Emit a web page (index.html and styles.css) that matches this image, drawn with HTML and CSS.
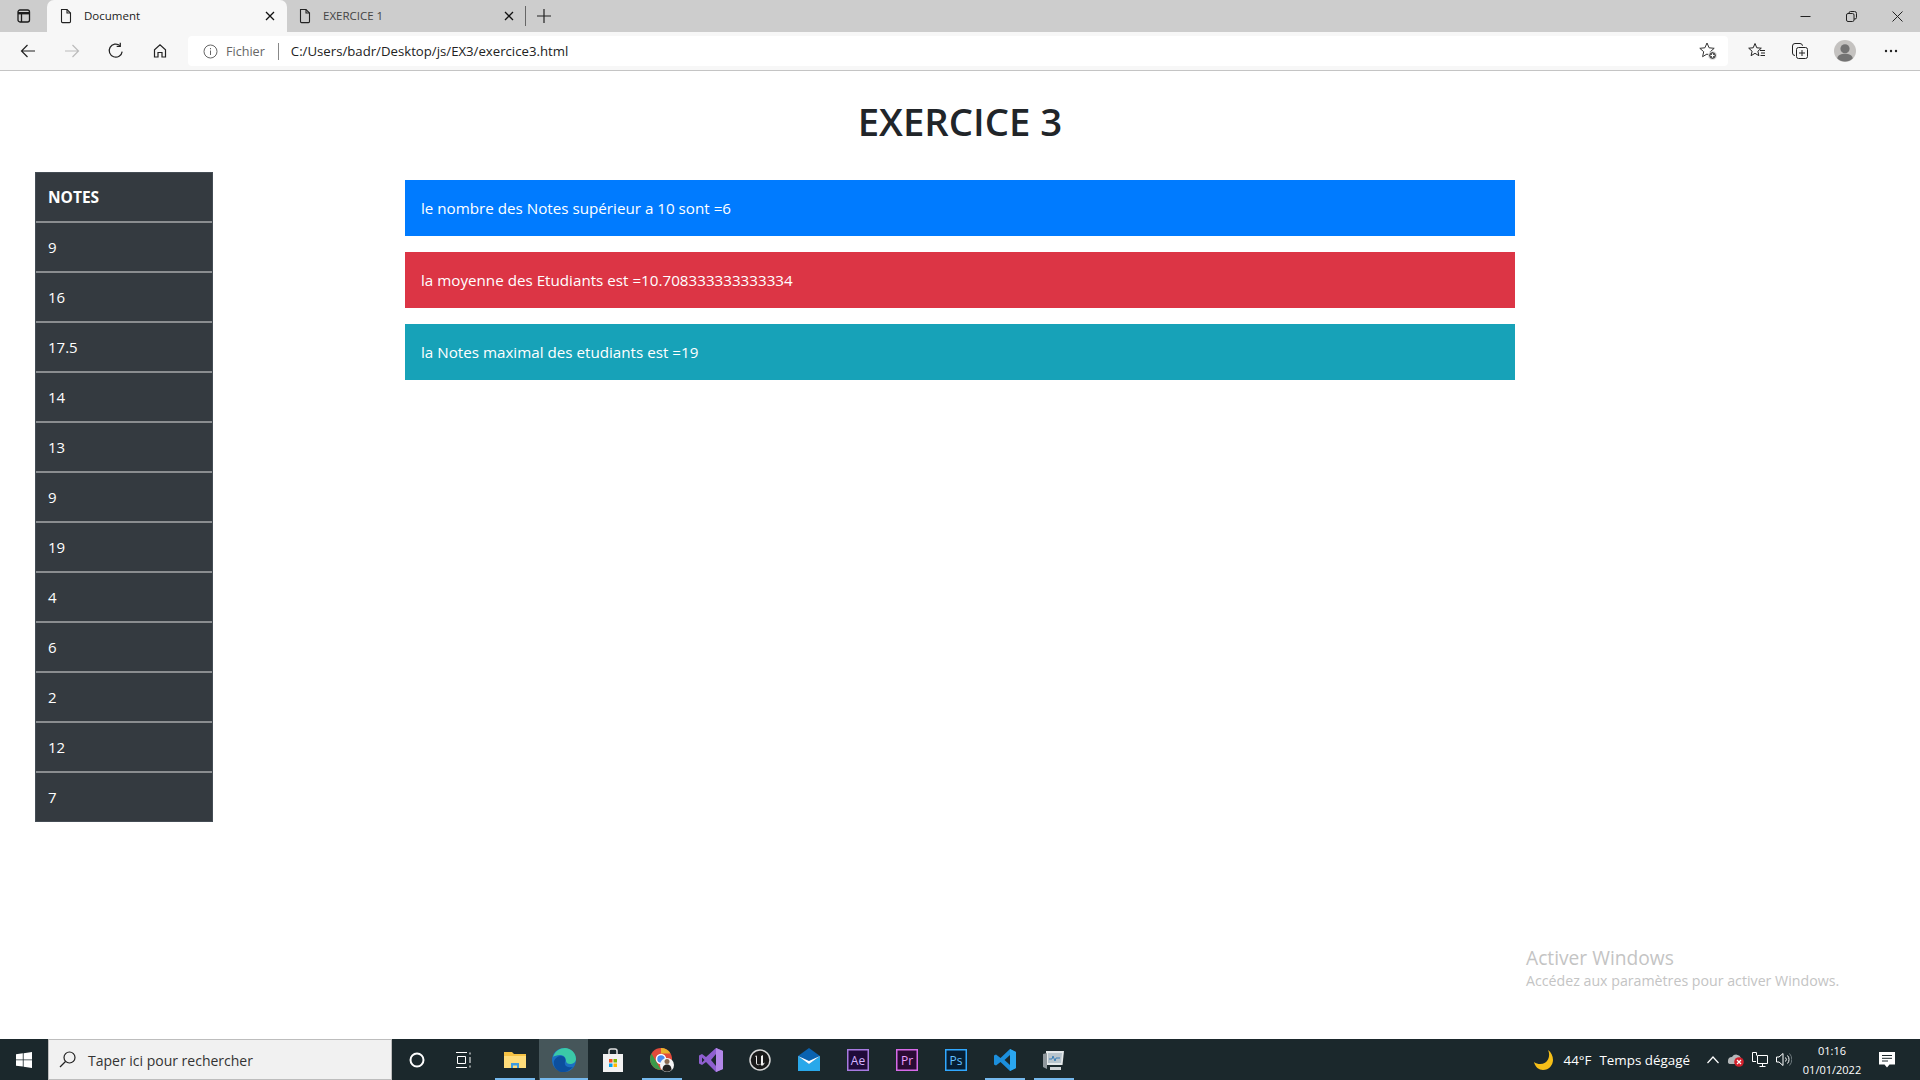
FILE: index.html
```html
<!DOCTYPE html>
<html lang="fr">
<head>
<meta charset="utf-8">
<title>Document</title>
<link rel="stylesheet" href="styles.css">
</head>
<body>
<div class="screen">
  <header class="tabbar">
    <div class="tabside">
      <svg class="ic" width="16" height="16" viewBox="0 0 16 16" fill="none" stroke="#1a1a1a" stroke-width="1.3"><rect x="2" y="2" width="11.5" height="12" rx="2"/><path d="M2 5.2h11.5" stroke-width="2.4"/><path d="M5.5 5v9"/></svg>
    </div>
    <div class="tab tab-active">
      <svg class="ic" width="14" height="16" viewBox="0 0 14 16" fill="none" stroke="#222" stroke-width="1.1"><path d="M2.5 1.5h5.5l3.5 3.5v8.6a1 1 0 0 1-1 1H3.500a1 1 0 0 1-1-1z"/><path d="M8 1.500v3.500h3.500"/></svg>
      <span class="tabtitle">Document</span>
      <svg class="ic tabx" width="10" height="10" viewBox="0 0 10 10" stroke="#111" stroke-width="1.300"><path d="M1 1l8 8M9 1l-8 8"/></svg>
    </div>
    <div class="tab tab-second">
      <svg class="ic" width="14" height="16" viewBox="0 0 14 16" fill="none" stroke="#222" stroke-width="1.100"><path d="M2.500 1.500h5.500l3.500 3.500v8.600a1 1 0 0 1-1 1H3.500a1 1 0 0 1-1-1z"/><path d="M8 1.500v3.500h3.500"/></svg>
      <span class="tabtitle tabtitle-dim">EXERCICE 1</span>
      <svg class="ic tabx" width="10" height="10" viewBox="0 0 10 10" stroke="#111" stroke-width="1.300"><path d="M1 1l8 8M9 1l-8 8"/></svg>
    </div>
    <div class="tabsep"></div>
    <svg class="ic newtab" width="14" height="14" viewBox="0 0 14 14" stroke="#222" stroke-width="1.200"><path d="M7 0v14M0 7h14"/></svg>
    <div class="winctl">
      <svg class="ic" width="11" height="11" viewBox="0 0 11 11" stroke="#222"><path d="M0.500 5.500h10"/></svg>
      <svg class="ic" width="11" height="11" viewBox="0 0 11 11" fill="none" stroke="#222"><rect x="0.500" y="2.500" width="7.500" height="8" rx="1.500"/><path d="M3 2.500v-.5a1.500 1.500 0 0 1 1.500-1.500h4a2 2 0 0 1 2 2v4a1.500 1.500 0 0 1-1.500 1.500H8"/></svg>
      <svg class="ic" width="11" height="11" viewBox="0 0 11 11" stroke="#222"><path d="M.5.500l10 10M10.500.500l-10 10"/></svg>
    </div>
  </header>

  <nav class="toolbar">
    <svg class="ic tool tool-first" width="16" height="16" viewBox="0 0 16 16" fill="none" stroke="#222" stroke-width="1.200"><path d="M15 8H1.500M7.500 2l-6 6 6 6"/></svg>
    <svg class="ic tool" width="16" height="16" viewBox="0 0 16 16" fill="none" stroke="#bbb" stroke-width="1.200"><path d="M1 8h13.500M8.500 2l6 6-6 6"/></svg>
    <svg class="ic tool tool-big" width="18" height="18" viewBox="0 0 16 16" fill="none" stroke="#222" stroke-width="1.100"><path d="M13.500 8.500A5.800 5.800 0 1 1 11.500 3.200"/><path d="M11.800 .6v3.200H8.600"/></svg>
    <svg class="ic tool" width="16" height="16" viewBox="0 0 16 16" fill="none" stroke="#222" stroke-width="1.200"><path d="M2.500 14V6.800L8 1.800l5.500 5V14h-3.500V9.500H6V14z"/></svg>
    <div class="omnibox">
      <svg class="ic" width="15" height="15" viewBox="0 0 15 15" fill="none" stroke="#666"><circle cx="7.500" cy="7.500" r="6.500"/><path d="M7.500 6.500v4.500M7.500 4v1.300"/></svg>
      <span class="scheme">Fichier</span>
      <span class="omnisep"></span>
      <span class="url">C:/Users/badr/Desktop/js/EX3/exercice3.html</span>
      <svg class="ic omnistar" width="18" height="18" viewBox="0 0 18 18" fill="none" stroke="#333"><path d="M8 1l2.100 4.800 5.100.5-3.900 3.400 1.100 5-4.400-2.700-4.400 2.700 1.100-5L.8 6.300l5.100-.5z"/><circle cx="13.500" cy="13.500" r="4" fill="#555" stroke="#f7f7f7"/><path d="M13.500 11.500v4M11.500 13.500h4" stroke="#fff"/></svg>
    </div>
    <div class="tools-right">
      <svg class="ic" width="18" height="18" viewBox="0 0 18 18" fill="none" stroke="#222"><path d="M7 1.500l1.800 4.300 4.500.4-3.400 3 1 4.500L7 11.300 3.100 13.700l1-4.500L.7 6.200l4.500-.4zM12 8.500h5M13 11h4M12.500 13.500h4.500"/></svg>
      <svg class="ic" width="18" height="18" viewBox="0 0 18 18" fill="none" stroke="#222"><path d="M4 13.500A2.500 2.500 0 0 1 1.500 11V4A2.500 2.500 0 0 1 4 1.500h5A2.500 2.500 0 0 1 11.500 3.800"/><rect x="5.500" y="5.500" width="11" height="11" rx="2"/><path d="M11 8v6M8 11h6"/></svg>
      <svg class="ic" width="22" height="22" viewBox="0 0 24 24"><circle cx="12" cy="12" r="12" fill="#c4c2c0"/><circle cx="12" cy="9.500" r="5" fill="#737373"/><path d="M3.500 20c1-4 4.500-5 8.500-5s7.500 1 8.500 5a12 12 0 0 1-17 0z" fill="#737373"/></svg>
      <svg class="ic tool-dots" width="14" height="4" viewBox="0 0 14 4" fill="#222"><circle cx="2" cy="2" r="1.200"/><circle cx="7" cy="2" r="1.200"/><circle cx="12" cy="2" r="1.200"/></svg>
    </div>
  </nav>

  <main class="page">
    <h1 class="title">EXERCICE 3</h1>
    <div class="content">
      <table class="notes">
        <thead><tr><th>NOTES</th></tr></thead>
        <tbody>
          <tr><td>9</td></tr>
          <tr><td>16</td></tr>
          <tr><td>17.5</td></tr>
          <tr><td>14</td></tr>
          <tr><td>13</td></tr>
          <tr><td>9</td></tr>
          <tr><td>19</td></tr>
          <tr><td>4</td></tr>
          <tr><td>6</td></tr>
          <tr><td>2</td></tr>
          <tr><td>12</td></tr>
          <tr><td>7</td></tr>
        </tbody>
      </table>
      <div class="alerts">
        <div class="alert alert-blue">le nombre des Notes supérieur a 10 sont =6</div>
        <div class="alert alert-red">la moyenne des Etudiants est =10.708333333333334</div>
        <div class="alert alert-teal">la Notes maximal des etudiants est =19</div>
      </div>
    </div>
    <div class="watermark">
      <div class="wm-title">Activer Windows</div>
      <div class="wm-sub">Accédez aux paramètres pour activer Windows.</div>
    </div>
  </main>

  <footer class="taskbar">
    <div class="start">
      <svg class="ic" width="16" height="16" viewBox="0 0 16 16" fill="#fff"><path d="M0 2.300l6.800-1v6.200H0zM7.600 1.200L16 0v7.500H7.600zM0 8.300h6.800v6.300L0 13.700zM7.600 8.300H16V16l-8.400-1.200z"/></svg>
    </div>
    <div class="search">
      <svg class="ic" width="17" height="17" viewBox="0 0 17 17" fill="none" stroke="#222" stroke-width="1.200"><circle cx="10.500" cy="6.500" r="5.500"/><path d="M6.500 10.500L1 16"/></svg>
      <span class="search-text">Taper ici pour rechercher</span>
    </div>
    <div class="tb-cell">
      <svg class="ic" width="16" height="16" viewBox="0 0 16 16" fill="none" stroke="#fff" stroke-width="2"><circle cx="8" cy="8" r="6.500"/></svg>
    </div>
    <div class="tb-cell tb-view">
      <svg class="ic" width="16" height="16" viewBox="0 0 16 16" fill="none" stroke="#fff"><path d="M0 .5h11M0 15.500h11M1.500 4.500h8v7h-8zM14 .5v2M14 5v6M14 13.500v2"/></svg>
    </div>
    <div class="apps">
      <div class="app app-open">
        <svg class="ic" width="22" height="20" viewBox="0 0 22 20"><path d="M0 2h8l2 2h12v14H0z" fill="#f6c244"/><path d="M0 6h22v12H0z" fill="#ffdc7a"/><path d="M7 13h8v5h-2v-2.500H9V18H7z" fill="#3d9be0"/></svg>
      </div>
      <div class="app app-active">
        <svg class="ic" width="24" height="24" viewBox="0 0 24 24"><circle cx="12" cy="12" r="12" fill="#1b6fc2"/><path d="M1 9C3 3 8 0 13 0c6 0 11 5 11 11 0 3-3 5-6 5-2 0-4-1-4-3 0-4-3-6-6-6-3 0-6 1-7 2z" fill="#3bc9a7"/><path d="M9 24C4 22 1 18 2 13c1-3 4-5 7-5 4 0 5 3 4 6-1 4 3 6 8 5-3 3-7 6-12 5z" fill="#0c4f9e"/></svg>
      </div>
      <div class="app">
        <svg class="ic" width="20" height="24" viewBox="0 0 20 24"><path d="M6 7V3a2 2 0 0 1 2-2h4a2 2 0 0 1 2 2v4" fill="none" stroke="#e0e0e0" stroke-width="1.500"/><path d="M0 6h20v18H0z" fill="#f2f2f2"/><path d="M6 11h3.500v3.500H6z" fill="#f25022"/><path d="M10.500 11H14v3.500h-3.500z" fill="#7fba00"/><path d="M6 15.500h3.500V19H6z" fill="#00a4ef"/><path d="M10.500 15.500H14V19h-3.500z" fill="#ffb900"/></svg>
      </div>
      <div class="app app-open">
        <svg class="ic" width="24" height="24" viewBox="0 0 24 24"><circle cx="11" cy="11" r="11" fill="#e24a3b"/><path d="M11 0a11 11 0 0 1 9.500 5.500H11z" fill="#e9b32d"/><path d="M1.500 5.500L7 15l4 7a11 11 0 0 1-9.500-16.500z" fill="#3a9a4a"/><circle cx="11" cy="11" r="4.500" fill="#4a8af0" stroke="#fff" stroke-width="1.500"/><circle cx="17" cy="17" r="7" fill="#f5f5f5"/><circle cx="17" cy="13.500" r="2.500" fill="#8a6a52"/><path d="M12.500 22c0-4 2-5.500 4.500-5.500s4.500 1.500 4.500 5.500a7 7 0 0 1-9 0z" fill="#222"/></svg>
      </div>
      <div class="app">
        <svg class="ic" width="24" height="26" viewBox="0 0 24 26"><path d="M17 1l7 3v18l-7 3L7 15l-4 3-3-1.500v-8L3 7l4 3z" fill="#8f5fd0"/><path d="M17 7l-5 6 5 6z" fill="#1b282c"/><path d="M3 10.500v5L5.500 13z" fill="#1b282c"/><path d="M17 1l7 3v18l-7 3z" fill="#b387e8"/></svg>
      </div>
      <div class="app">
        <svg class="ic" width="22" height="22" viewBox="0 0 22 22"><circle cx="11" cy="11" r="10" fill="#1a1a1a" stroke="#d8d8d8" stroke-width="1.500"/><path d="M6 7c2-1.500 2 0 2 2v5c0 2 3 2 4 .5V7l2-1v8.500l2-1-2 3h-2v-1.500c-1.500 1.500-5 2-5-1.500V8z" fill="#f0f0f0"/></svg>
      </div>
      <div class="app">
        <svg class="ic" width="22" height="23" viewBox="0 0 22 23"><path d="M0 8l11-8 11 8v15H0z" fill="#0a62b0"/><path d="M0 8l11 8 11-8v15H0z" fill="#29a8ea"/><path d="M0 8l11 8 11-8-11 5z" fill="#fff"/></svg>
      </div>
      <div class="app">
        <svg class="ic" width="22" height="22" viewBox="0 0 22 22"><rect x=".75" y=".75" width="20.500" height="20.500" fill="#1f0a3a" stroke="#a77ae0" stroke-width="1.500"/><text x="11" y="16" class="badge-text badge-ae">Ae</text></svg>
      </div>
      <div class="app">
        <svg class="ic" width="22" height="22" viewBox="0 0 22 22"><rect x=".75" y=".75" width="20.500" height="20.500" fill="#2a0a34" stroke="#d66ae8" stroke-width="1.500"/><text x="11" y="16" class="badge-text badge-pr">Pr</text></svg>
      </div>
      <div class="app">
        <svg class="ic" width="22" height="22" viewBox="0 0 22 22"><rect x=".75" y=".75" width="20.500" height="20.500" fill="#061e33" stroke="#31a8ff" stroke-width="1.500"/><text x="11" y="16" class="badge-text badge-ps">Ps</text></svg>
      </div>
      <div class="app app-open">
        <svg class="ic" width="24" height="24" viewBox="0 0 24 24"><path d="M17 1l6 3v16l-6 3L7.500 14 3 17.500 1 16.500v-9l2-1L7.500 10z" fill="#1c8fdd"/><path d="M17 7l-5.500 5 5.500 5z" fill="#1b282c"/><path d="M17 1l6 3v16l-6 3z" fill="#2aa6ef"/></svg>
      </div>
      <div class="app app-open">
        <svg class="ic" width="24" height="24" viewBox="0 0 24 24"><path d="M4 3h18l-1.500 14H4z" fill="#e4e8ea"/><path d="M6 5h14l-1 10H6z" fill="#b8c4cc"/><path d="M7 11h3l1-3 2 5 1-3h4" fill="none" stroke="#3a7fb8"/><path d="M1 6l4-1v16l-4-2z" fill="#8f979c"/><path d="M8 19h11v3H8z" fill="#cfd3d6"/></svg>
      </div>
    </div>
    <div class="tray">
      <svg class="ic" width="20" height="20" viewBox="0 0 20 20"><path d="M14 0c3 6 0 14-8 14-2 0-4-.5-6-2 1 5 5 8 9 8 6 0 10-5 10-10 0-4-2-8-5-10z" fill="#f6bf18"/></svg>
      <span class="tray-temp">44°F</span>
      <span class="tray-weather">Temps dégagé</span>
      <svg class="ic tray-chev" width="12" height="8" viewBox="0 0 12 8" fill="none" stroke="#fff" stroke-width="1.200"><path d="M.5 7L6 1l5.500 6"/></svg>
      <svg class="ic" width="17" height="15" viewBox="0 0 17 15"><path d="M1 9a4 4 0 0 1 4-4 5 5 0 0 1 9 1l-5 6H3a2.500 2.500 0 0 1-2-3z" fill="#b5b8ba"/><circle cx="12" cy="10" r="4.800" fill="#d3202c"/><path d="M10 8l4 4M14 8l-4 4" stroke="#fff" stroke-width="1.200"/></svg>
      <svg class="ic" width="16" height="15" viewBox="0 0 16 15" fill="none" stroke="#fff"><path d="M4.500 3.500V.5h-4v9H4M5.500 3.500h10v8h-10zM10.500 11.500v3M7.500 14.500h6"/></svg>
      <svg class="ic" width="16" height="15" viewBox="0 0 16 15" fill="none" stroke="#fff"><path d="M.5 5v5h2.500l4 3.500v-12L3 5zM9.500 5.500a3 3 0 0 1 0 4M11.500 3.500a6 6 0 0 1 0 8"/><path d="M13.500 1.500a9 9 0 0 1 0 12" stroke="#6f7a7e"/></svg>
      <div class="clock"><span>01:16</span><span>01/01/2022</span></div>
      <svg class="ic tray-notif" width="16" height="16" viewBox="0 0 16 16"><path d="M0 0h16v12.500H10.500L8 15.500l-2.500-3H0z" fill="#fff"/><path d="M3 3.500h10M3 6.300h10M3 9h6" stroke="#1b282c"/></svg>
    </div>
  </footer>
</div>
</body>
</html>
```
FILE: styles.css
```css
* { box-sizing: border-box; }
html, body { margin: 0; padding: 0; }
body { font-family: "Open Sans", "Noto Sans", sans-serif; background: #fff; }
.screen { width: 1920px; height: 1080px; display: flex; flex-direction: column; overflow: hidden; }
.ic { display: block; flex: none; }

.tabbar { height: 32px; background: #cdcdcd; display: flex; align-items: center; }
.tabside { width: 47px; display: flex; justify-content: center; }
.tab { width: 240px; height: 32px; padding: 0 12px 0 12px; display: flex; align-items: center; gap: 11px; }
.tab-active { background: #f7f7f7; border-radius: 7px 7px 0 0; }
.tab-second { margin-left: -1px; }
.tabtitle { font-size: 11.500px; color: #222; flex: 1; padding-bottom: 1px; }
.tabtitle-dim { color: #444; }
.tabsep { width: 1px; height: 20px; background: #666; margin-left: -1px; }
.newtab { margin-left: 11px; }
.winctl { margin-left: auto; display: flex; align-items: center; gap: 35px; padding-right: 17px; }

.toolbar { height: 39px; background: #f7f7f7; border-bottom: 1px solid #c4c4c4; display: flex; align-items: center; }
.tool { margin-right: 28px; }
.tool-first { margin-left: 20px; }
.tool-big { margin-left: -1px; margin-right: 27px; }
.omnibox { width: 1540px; height: 30px; margin-left: -8px; background: #fff; border-radius: 4px; display: flex; align-items: center; padding: 0 11px 0 15px; }
.scheme { font-size: 12.600px; color: #666; margin-left: 8px; }
.omnisep { width: 1px; height: 17px; background: #888; margin-left: 13px; }
.url { font-size: 13.200px; color: #222; margin-left: 12px; }
.omnistar { margin-left: auto; }
.tools-right { display: flex; align-items: center; gap: 25px; margin-left: 20px; }
.tool-dots { margin-left: 3px; }

.page { position: relative; flex: 1; background: #fff; padding-top: 23px; }
.title { margin: 0; text-align: center; font-size: 38.300px; line-height: 54px; font-weight: 600; color: #212529; }
.content { display: flex; margin-top: 24px; }
.notes { width: 178px; height: 650px; margin-left: 35px; border-collapse: separate; border-spacing: 0; border: 1px solid #454d55; background: #343a40; color: #fff; font-size: 15px; }
.notes th, .notes td { height: 50px; padding: 0 12px; text-align: left; border-bottom: 2px solid #8a8d90; }
.notes th { font-weight: 700; font-size: 15.500px; }
.notes tr:last-child td { border-bottom: 0; height: 48px; }
.alerts { width: 1110px; margin-left: 192px; padding-top: 8px; display: flex; flex-direction: column; gap: 16px; }
.alert { height: 56px; padding: 0 16px; display: flex; align-items: center; font-size: 15.200px; color: #fff; }
.alert-blue { background: #007bff; }
.alert-red { background: #dc3545; }
.alert-teal { background: #17a2b8; }

.watermark { position: absolute; left: 1526px; top: 874px; color: #c4c4c4; }
.wm-title { font-size: 19.200px; line-height: 26px; }
.wm-sub { font-size: 14.200px; line-height: 20px; }

.taskbar { height: 41px; background: #1b282c; display: flex; align-items: center; color: #fff; }
.start { width: 48px; display: flex; justify-content: center; }
.search { width: 344px; height: 41px; background: #f1f1f1; border: 1px solid #bdbdbd; display: flex; align-items: center; padding-left: 10px; gap: 12px; }
.search-text { font-size: 14px; color: #333; padding-top: 2px; }
.tb-cell { width: 49px; display: flex; justify-content: center; }
.tb-view { width: 28px; margin-left: 9px; }
.apps { display: flex; margin-left: 12px; }
.app { width: 49px; height: 41px; display: flex; align-items: center; justify-content: center; }
.app-open { background: linear-gradient(#76b9ed, #76b9ed) bottom center / 40px 2px no-repeat; }
.app-active { background: linear-gradient(#76b9ed, #76b9ed) bottom center / 48px 2px no-repeat, #46565a; }
.badge-text { font-family: "Open Sans", sans-serif; font-size: 12px; text-anchor: middle; }
.badge-ae { fill: #d4b4ff; }
.badge-pr { fill: #e9a0ff; }
.badge-ps { fill: #64c0ff; }
.tray { margin-left: auto; display: flex; align-items: center; font-size: 13.400px; }
.tray-temp { margin-left: 9px; }
.tray-weather { margin-left: 8px; }
.tray-chev { margin-left: 17px; }
.tray > svg + svg { margin-left: 8px; }
.clock { display: flex; flex-direction: column; align-items: center; font-size: 11px; line-height: 19px; margin-left: 4px; width: 72px; }
.tray > .tray-notif { margin-left: 11px; margin-right: 25px; }
```
